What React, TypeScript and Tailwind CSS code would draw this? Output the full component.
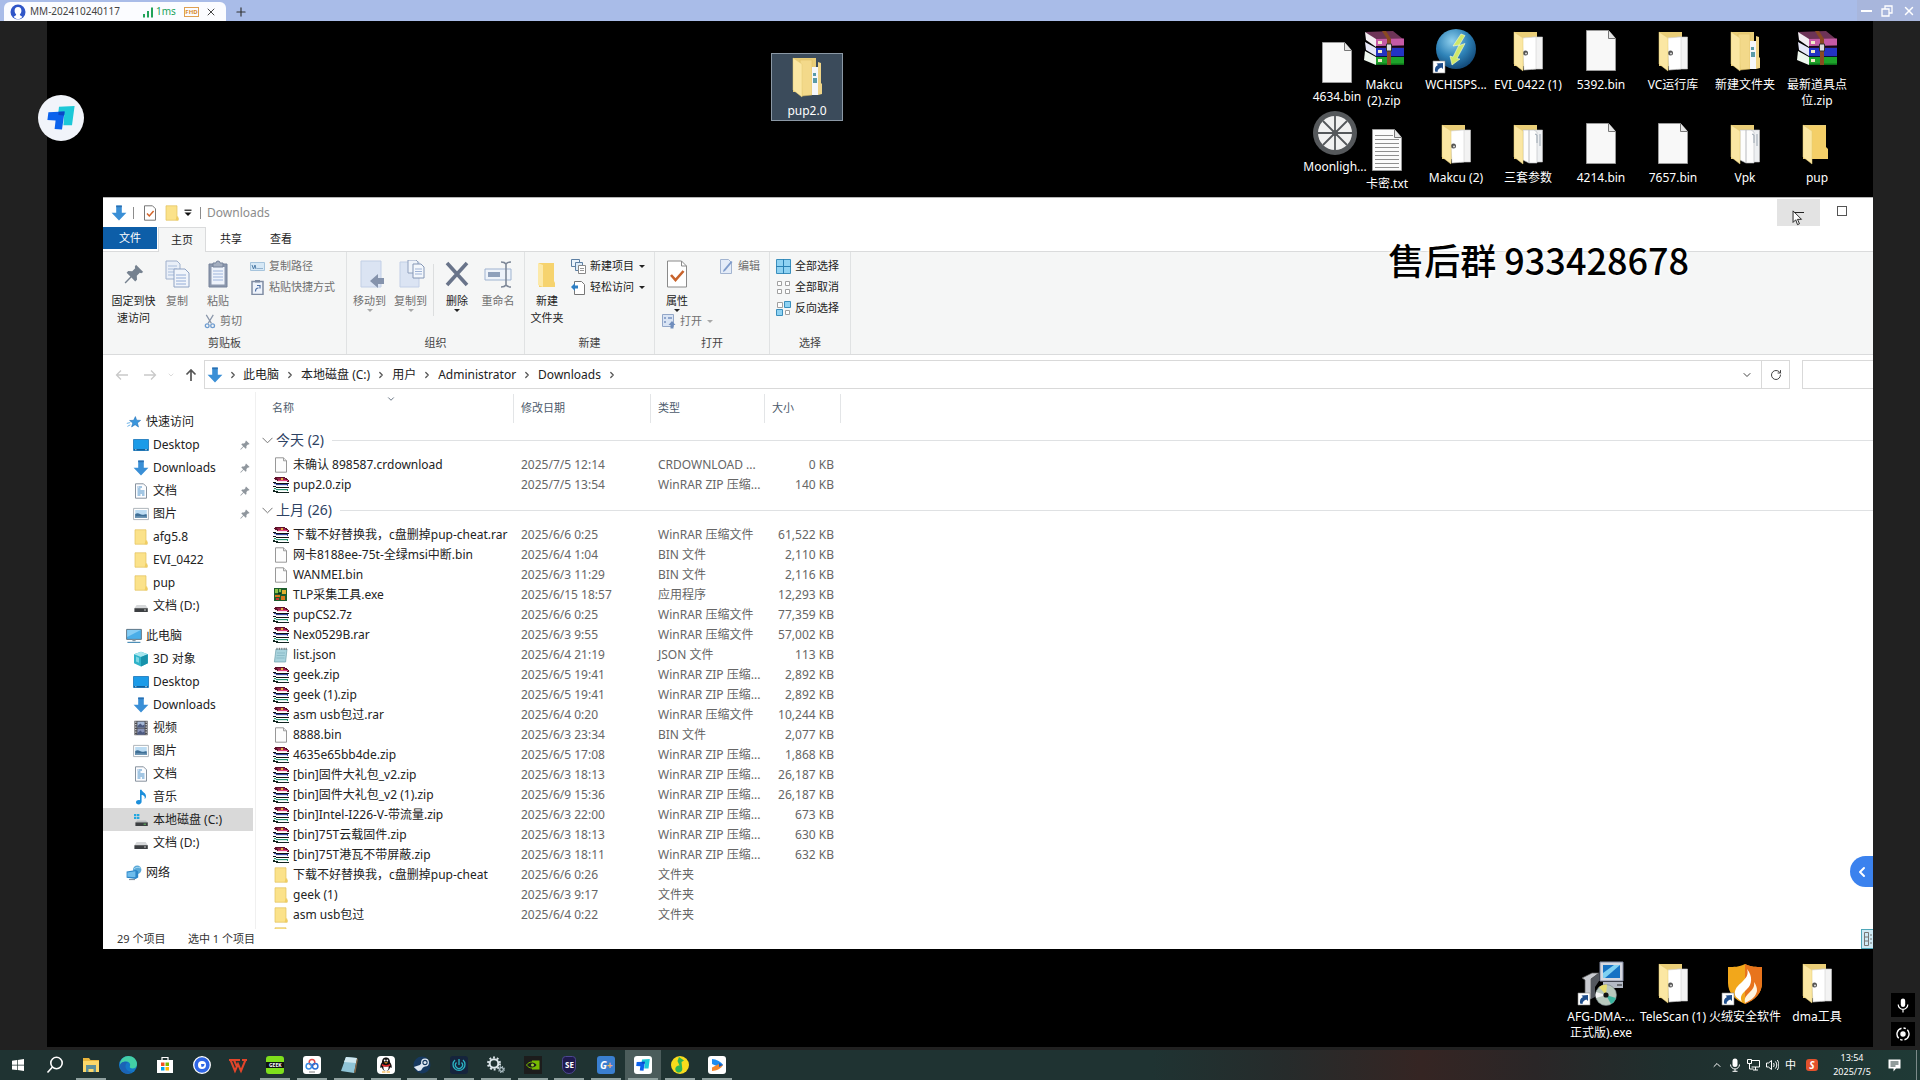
import type { ReactNode } from "react";
import { ChevronDown, ChevronLeft, ChevronRight, ChevronUp, Plus, RotateCw, X } from "lucide-react";

type IconProps = { className?: string };

/* ---------- small icons (16px) ---------- */

function FileIcon({ className = "w-4 h-4" }: IconProps) {
  return (
    <svg viewBox="0 0 16 16" className={className}>
      <path d="M2.5.8h8l3 3v11.4h-11z" fill="#fdfdfd" stroke="#8c8c8c" strokeWidth="0.9" />
      <path d="M10.5.8v3h3" fill="#e8e8e8" stroke="#8c8c8c" strokeWidth="0.8" />
    </svg>
  );
}

function RarIcon({ className = "w-4 h-4" }: IconProps) {
  return (
    <svg viewBox="0 0 16 16" className={className} shapeRendering="crispEdges">
      <path d="M2 0h9l4 2v1h1v2H5L1 3V1z" fill="#5c1027" />
      <path d="M3 1h8l3 2H6z" fill="#96204a" />
      <path d="M5 3h10v1H5z" fill="#e0457f" />
      <path d="M1 2l4 2h9v1H5L1 3z" fill="#f3e6ea" />
      <path d="M0 5l5 1h11v1H5L0 6z" fill="#111" />
      <path d="M1 6l4 1h10v2H5L1 8z" fill="#34499c" />
      <path d="M1 7l4 1h9v1H5L1 8z" fill="#dfe4f3" />
      <path d="M0 9l5 1h11v1H5l-5-1z" fill="#111" />
      <path d="M1 11l4 1h10v2H5l-4-1z" fill="#23936f" />
      <path d="M0 12l5 1h9v1H5l-5-1z" fill="#dcefe8" />
      <path d="M0 13l5 1.500h11V16H5l-5-1z" fill="#10241f" />
      <path d="M8 1h2v2H8z" fill="#e3b23c" />
    </svg>
  );
}

function FolderIcon({ className = "w-4 h-4" }: IconProps) {
  return (
    <svg viewBox="0 0 16 16" className={className}>
      <path d="M2 .8h11v11l1.2 1v2.4H2z" fill="#fbe28a" stroke="#e2c25c" strokeWidth="0.7" />
      <path d="M12.4 11.4h1.8v3.8h-2.6z" fill="#f0cd62" />
    </svg>
  );
}

function ExeIcon({ className = "w-4 h-4" }: IconProps) {
  return (
    <svg viewBox="0 0 16 16" className={className} shapeRendering="crispEdges">
      <path d="M1 1h13v13H1z" fill="#1d5c2c" />
      <path d="M2 2h3v4H2zM6 2h2v3H6z" fill="#8bc34a" />
      <path d="M9 3h4v4H9z" fill="#e0b030" />
      <path d="M2 8h5v2H2zM8 9h4v4H8z" fill="#d67a1d" />
      <path d="M3 11h3v2H3z" fill="#c9302c" />
      <path d="M5 6h3v1H5z" fill="#102e17" />
    </svg>
  );
}

function JsonIcon({ className = "w-4 h-4" }: IconProps) {
  return (
    <svg viewBox="0 0 16 16" className={className}>
      <path d="M3 2h11l-1.4 13H1.4z" fill="#a9d3dd" stroke="#6d9fab" strokeWidth="0.7" />
      <path d="M4 6h8M3.7 8.5h8M3.4 11h8" stroke="#7fb2be" strokeWidth="0.7" />
      <path d="M4 .8v2M6.4.8v2M8.8.8v2M11.2.8v2M13.2.8v2" stroke="#666" strokeWidth="0.9" />
    </svg>
  );
}

function DownArrowIcon({ className = "w-4 h-4" }: IconProps) {
  return (
    <svg viewBox="0 0 16 16" className={className}>
      <path d="M5.2.6h5.6v7.2h4.6L8 15.4.6 7.8h4.6z" fill="#3a8fd6" />
      <path d="M5.2.6h5.6v1.6H5.2z" fill="#2b6fb0" />
    </svg>
  );
}

function StarIcon({ className = "w-4 h-4" }: IconProps) {
  return (
    <svg viewBox="0 0 16 16" className={className}>
      <path
        d="M9.400 2.600l1.200 3.600 4 .2-3.200 2.500 1.100 4.100-3.400-2.300-3.500 2.200 1.200-4L3.600 6.500l4-.2z"
        fill="#3a96dd"
        stroke="#2572b8"
        strokeWidth="0.6"
      />
      <path d="M.8 9.400l3.400-.8M1.400 12.400l3-1.600" stroke="#6db3e8" />
    </svg>
  );
}

function DesktopIcon({ className = "w-4 h-4" }: IconProps) {
  return (
    <svg viewBox="0 0 16 16" className={className}>
      <path d="M.5 2.5h15v11H.5z" fill="#1b9be8" stroke="#1674b8" strokeWidth="0.8" />
      <path d="M1 12h14v1.4H1z" fill="#0e5f9c" />
      <path d="M2 12.7h1.5M12 12.7h2" stroke="#fff" strokeWidth="0.6" />
    </svg>
  );
}

function DocIcon({ className = "w-4 h-4" }: IconProps) {
  return (
    <svg viewBox="0 0 16 16" className={className}>
      <path d="M2.5.8h8l3 3v11.4h-11z" fill="#fcfdff" stroke="#7b8794" strokeWidth="0.9" />
      <path d="M4.5 6h3M4.5 8h7M4.5 10h7M4.5 12h3M9 12h2.5M6 4h3" stroke="#4a90c8" />
      <path d="M4.5 4h1" stroke="#2b6fb0" />
    </svg>
  );
}

function PictureIcon({ className = "w-4 h-4" }: IconProps) {
  return (
    <svg viewBox="0 0 16 16" className={className}>
      <path d="M.6 2.4h14.8v11.2H.6z" fill="#fff" stroke="#9aa3ab" strokeWidth="0.8" />
      <path d="M2.2 4h11.6v8H2.2z" fill="#bcdcf3" />
      <path d="M2.2 8c3-2 5 .6 7 .8 2 .1 3-.6 4.6-.4V12H2.2z" fill="#3f6f96" />
      <path d="M2.2 10.6c4-.8 7 0 11.6-.2V12H2.2z" fill="#6f97b5" />
    </svg>
  );
}

function DriveIcon({ className = "w-4 h-4" }: IconProps) {
  return (
    <svg viewBox="0 0 16 16" className={className}>
      <path d="M3.6 7h9l2.2 3.2H1.4z" fill="#d6d8da" />
      <path d="M1.4 10.2h13.4V14H1.4z" fill="#3c3f42" />
      <path d="M11 12h2" stroke="#e8e8e8" strokeWidth="0.8" />
    </svg>
  );
}

function SystemDriveIcon({ className = "w-4 h-4" }: IconProps) {
  return (
    <svg viewBox="0 0 16 16" className={className}>
      <path d="M1 2h2.4v2.2H1zM4 2h2.4v2.2H4zM1 4.9h2.4V7H1zM4 4.9h2.4V7H4z" fill="#22a7e0" />
      <path d="M4.2 8.6h8.6l2 2H2.4z" fill="#b9bcbe" />
      <path d="M2.4 10.4h12.4V14H2.4z" fill="#3c3f42" />
      <path d="M10.6 12.2h2.4" stroke="#6be06b" strokeWidth="0.8" />
    </svg>
  );
}

function ThisPcIcon({ className = "w-4 h-4" }: IconProps) {
  return (
    <svg viewBox="0 0 16 16" className={className}>
      <path d="M.6 1.4h14.8v10H.6z" fill="#4aaee8" stroke="#5c6f7d" strokeWidth="0.9" />
      <path d="M1.2 2h13.6L1.2 9z" fill="#86cdf4" />
      <path d="M6.4 11.6h3.2v1.6H6.4z" fill="#8a98a3" />
      <path d="M1.4 14.4h13" stroke="#4e8fb8" strokeWidth="1.2" />
    </svg>
  );
}

function CubeIcon({ className = "w-4 h-4" }: IconProps) {
  return (
    <svg viewBox="0 0 16 16" className={className}>
      <path d="M8 .8l6.8 2.4v9L8 15.4 1 12.2v-9z" fill="#2fb3c9" />
      <path d="M8 .8l6.8 2.4L8 6 1 3.2z" fill="#a7e6ee" />
      <path d="M8 6l6.8-2.8v9L8 15.4z" fill="#1792ab" />
      <path d="M3 5.6l3 1.2v5l-3-1.3z" fill="#7cd6e3" />
    </svg>
  );
}

function VideoIcon({ className = "w-4 h-4" }: IconProps) {
  return (
    <svg viewBox="0 0 16 16" className={className}>
      <path d="M1.4.8h13.2v14.4H1.4z" fill="#4b4b50" />
      <path d="M4.4 1.6h7.2v6H4.4z" fill="#a3b7d6" />
      <path d="M4.4 8.6h7.2v6H4.4z" fill="#8793b8" />
      <path d="M4.4 6l3-2.4 2 2 2.2-1v3H4.4zM4.4 13l3-2.4 2 2 2.2-1v3H4.4z" fill="#4d5a80" />
      <path d="M2.8 1.6v13M13.2 1.6v13" stroke="#e6e6e6" strokeDasharray="1.2 1.3" strokeWidth="1.2" />
    </svg>
  );
}

function MusicIcon({ className = "w-4 h-4" }: IconProps) {
  return (
    <svg viewBox="0 0 16 16" className={className}>
      <path d="M7 .8h1.6c.4 2.6 4.6 3 4.4 6.6-.1 1.4-.7 2-1.4 2.6.8-2.6-1-3.8-3-4v6.8c0 1.500-1.400 2.600-3 2.600S3 14.500 3 13.200s1.400-2.200 2.800-2.200c.5 0 .9.1 1.200.2z" fill="#1c8fdb" />
    </svg>
  );
}

function NetworkIcon({ className = "w-4 h-4" }: IconProps) {
  return (
    <svg viewBox="0 0 16 16" className={className}>
      <circle cx="11.200" cy="4.800" r="4.200" fill="#5aa9d8" />
      <path d="M8 4c2-2 4-2 6.600-1" stroke="#a5d8f3" fill="none" />
      <path d="M.6 6.600l9.600-1.600 2 1.600v6L9.600 14 .6 12.800z" fill="#2c86c8" />
      <path d="M1.400 7.400l8-1.200v6l-8-.4z" fill="#6fbdec" />
      <path d="M3 14.600h6" stroke="#7b8894" />
    </svg>
  );
}

function PinIcon({ className = "w-3 h-3" }: IconProps) {
  return (
    <svg viewBox="0 0 20 20" className={className}>
      <path d="M12 .8l7.200 7.200-2 1.200-1.400-.4-3 3 .2 4-1.800 1.600-3.800-3.800L1.600 19.400.6 18.400l5.800-5.800-3.800-3.800 1.600-1.800 4 .2 3-3-.4-1.400z" fill="currentColor" />
    </svg>
  );
}

/* ---------- desktop icons, all on a 44px board ---------- */

function Board({ children }: { children: ReactNode }) {
  return (
    <svg viewBox="0 0 44 44" className="w-11 h-11 overflow-visible">
      {children}
    </svg>
  );
}

const Shortcut = () => (
  <g>
    <path d="M-1 32h12v12H-1z" fill="#fff" stroke="#888" strokeWidth="0.6" />
    <path d="M1 42.500c-.4-3.500.6-5.500 3-6.500L2.500 34.500 9 34v6l-1.700-1.600C5 39.500 3.500 40.500 3.500 43z" fill="#1f4e8c" />
  </g>
);

const BigFile = () => (
  <Board>
    <path d="M7.500 1.500h22l7 8V41.500h-29z" fill="#f8f8f8" stroke="#9a9a9a" />
    <path d="M29.500 1.500v8h7" fill="#e6e6e6" stroke="#777" />
  </Board>
);

const BigText = () => (
  <Board>
    <path d="M7.500 1.500h22l7 8V42.500h-29z" fill="#fbfbfb" stroke="#9a9a9a" />
    <path d="M10 7.500h18M10 11.500h24M10 15.500h24M10 19.500h24M10 23.500h24M10 27.500h24M10 31.500h24M10 35.500h24M10 39.500h24" stroke="#8f8f8f" />
    <path d="M29.500 1.500v8h7" fill="#e6e6e6" stroke="#777" />
  </Board>
);

const BigFolder = ({ kind }: { kind: "gear" | "pages" | "stack" | "empty" }) => (
  <Board>
    <path d="M8 3h23v34H8z" fill="#e9cd77" />
    {kind === "empty" && <path d="M14 4h17v21l2 2v10H16z" fill="#f4cf68" />}
    {kind === "gear" && (
      <g>
        <path d="M26 8h10.500v32H26z" fill="#f3f3f3" stroke="#c8c8c8" strokeWidth="0.6" />
        <path d="M16 9l14-1v32l-12 1z" fill="#fff" stroke="#d0d0d0" strokeWidth="0.6" />
        <circle cx="19.500" cy="24" r="2.500" fill="#555" />
        <circle cx="20" cy="24.500" r="1" fill="#ddd" />
      </g>
    )}
    {kind === "pages" && (
      <g>
        <path d="M27 8h9.500v32H27z" fill="#eef0f2" stroke="#c0c0c0" strokeWidth="0.6" />
        <path d="M17 8l6 0v33l-6-3zM23 8h5l3 2v31h-8z" fill="#fdfdfd" stroke="#b8bcc0" strokeWidth="0.6" />
        <path d="M29 12l2 1v8M34 12v12" fill="none" stroke="#9aa5b0" />
      </g>
    )}
    {kind === "stack" && (
      <g>
        <path d="M15 5h12v35l-10 1z" fill="#f3d98a" stroke="#d9b95d" strokeWidth="0.5" />
        <path d="M27 12h6v28h-6z" fill="#f5f7fa" />
        <path d="M28 18h3v3h-3zM28 23h4v5h-4z" fill="#5a9aa8" />
        <path d="M33 7v33l4-1V29l-1-1V8z" fill="#f0d588" />
      </g>
    )}
    <path d="M8 3l9 6v33L8 35z" fill="#fbe7a3" stroke="#e3c873" strokeWidth="0.5" />
  </Board>
);

const BigRar = () => (
  <Board>
    <path d="M3 3l28-1 10 8-27 1z" fill="#6d3457" />
    <path d="M14 10l28-.5v7L14 17z" fill="#c65aa6" />
    <path d="M3 3l11 7v8L4 11z" fill="#f3eef2" />
    <path d="M14 17.500h28v1.500H14z" fill="#2a0f2a" />
    <path d="M14 19h28v8H14z" fill="#2333c4" />
    <path d="M3 13l11 6v8L4 21z" fill="#e6e8f8" />
    <path d="M14 27h28v1.500H14z" fill="#0a0f3c" />
    <path d="M14 28h28v8H14z" fill="#1da32a" />
    <path d="M3 22l11 6v8L2 31z" fill="#eef7ee" />
    <path d="M14 34.500h28V36H14z" fill="#0c6d18" />
    <path d="M16 12h4v3h-4zM16 21h4v3h-4zM16 30h4v3h-4z" fill="#f2e9c8" />
    <path d="M20 2l5 8v26h4V10l-5-8z" fill="#8a4a22" />
    <path d="M24.500 15h5v7h-5z" fill="#ddd" stroke="#333" />
  </Board>
);

const BigWch = () => (
  <Board>
    <defs>
      <radialGradient id="wch" cx="0.4" cy="0.3" r="0.8">
        <stop offset="0" stopColor="#8fd0ee" />
        <stop offset="0.5" stopColor="#2f83b8" />
        <stop offset="1" stopColor="#0a3a68" />
      </radialGradient>
    </defs>
    <circle cx="22" cy="20" r="20" fill="url(#wch)" />
    <path d="M27 5l-8 12 6-1-6 12-3-1 2 9 8-6-3-.5 8-15-6 2 6-10z" fill="#cfe86a" stroke="#f6fbd6" strokeWidth="0.6" />
    <Shortcut />
  </Board>
);

const BigMoonlight = () => (
  <Board>
    <circle cx="22" cy="22" r="22" fill="#55585b" />
    <circle cx="22" cy="22" r="17" fill="#f1f1f1" />
    <path d="M22 5v34M5 22h34M10 10l24 24M34 10L10 34" stroke="#55585b" strokeWidth="1.800" />
    <circle cx="22" cy="22" r="3" fill="#55585b" />
  </Board>
);

const BigInstaller = () => (
  <Board>
    <path d="M21 1h23v19H21z" fill="#d5d8e0" stroke="#8088a0" />
    <path d="M24 4h17v13H24z" fill="#1572c4" />
    <path d="M24 12l11-8h6l-15 13h-2z" fill="#7fd0f2" />
    <path d="M24 21h20v6H24z" fill="#b4bac6" />
    <path d="M38 24h5" stroke="#222" />
    <path d="M3 17l10-5h7l-8 6v20H6V19z" fill="#c9cbd0" stroke="#555" strokeWidth="0.7" />
    <path d="M12 18l8-6v8l-4 6v10l-4 2z" fill="#54585f" />
    <circle cx="27" cy="34" r="10.500" fill="#b9c8bd" stroke="#6e7a80" strokeWidth="0.6" />
    <path d="M27 34L20 26a10.500 10.500 0 0 1 8-2.500z" fill="#e6dd6f" />
    <path d="M27 34l10 3a10.500 10.500 0 0 1-5 6z" fill="#3cb5a0" />
    <path d="M27 34l-10 3a10 10 0 0 1 0-6z" fill="#f4f4f4" />
    <circle cx="27" cy="34" r="2.600" fill="#111" />
    <Shortcut />
  </Board>
);

const BigHuorong = () => (
  <Board>
    <path d="M22 3c6 3 11 3 17 3v16c0 10-7 17-17 21C12 39 5 32 5 22V6c6 0 11 0 17-3z" fill="#f2a71b" />
    <path d="M22 3c6 3 11 3 17 3v16c0 10-7 17-17 21z" fill="#e8741c" />
    <path d="M24 8c2 6-1 9-6 14-5 4-8 9-5 14l6 5c-3-6 1-9 5-13 5-4 6-13 0-20z" fill="#fff" />
    <path d="M31 21c1 5-2 8-5 11-3 3-5 5-4 10 7-3 11-7 12-12 0-4-1-6-3-9z" fill="#fff4df" />
    <Shortcut />
  </Board>
);

const desktopIcons: { label: string; icon: ReactNode; pos: string; selected?: boolean }[] = [
  { label: "pup2.0", icon: <BigFolder kind="stack" />, pos: "left-[724px] top-[32px]", selected: true },
  { label: "4634.bin", icon: <BigFile />, pos: "right-[500px] top-[18px]" },
  { label: "Makcu\n(2).zip", icon: <BigRar />, pos: "right-[453px] top-[6px]" },
  { label: "WCHISPS...", icon: <BigWch />, pos: "right-[381px] top-[6px]" },
  { label: "EVI_0422 (1)", icon: <BigFolder kind="gear" />, pos: "right-[309px] top-[6px]" },
  { label: "5392.bin", icon: <BigFile />, pos: "right-[236px] top-[6px]" },
  { label: "VC运行库", icon: <BigFolder kind="gear" />, pos: "right-[164px] top-[6px]" },
  { label: "新建文件夹", icon: <BigFolder kind="stack" />, pos: "right-[92px] top-[6px]" },
  { label: "最新道具点\n位.zip", icon: <BigRar />, pos: "right-[20px] top-[6px]" },
  { label: "Moonligh...", icon: <BigMoonlight />, pos: "right-[502px] top-[88px]" },
  { label: "卡密.txt", icon: <BigText />, pos: "right-[450px] top-[105px]" },
  { label: "Makcu (2)", icon: <BigFolder kind="gear" />, pos: "right-[381px] top-[99px]" },
  { label: "三套参数", icon: <BigFolder kind="pages" />, pos: "right-[309px] top-[99px]" },
  { label: "4214.bin", icon: <BigFile />, pos: "right-[236px] top-[99px]" },
  { label: "7657.bin", icon: <BigFile />, pos: "right-[164px] top-[99px]" },
  { label: "Vpk", icon: <BigFolder kind="pages" />, pos: "right-[92px] top-[99px]" },
  { label: "pup", icon: <BigFolder kind="empty" />, pos: "right-[20px] top-[99px]" },
  { label: "AFG-DMA-...\n正式版).exe", icon: <BigInstaller />, pos: "right-[236px] top-[938px]" },
  { label: "TeleScan (1)", icon: <BigFolder kind="gear" />, pos: "right-[164px] top-[938px]" },
  { label: "火绒安全软件", icon: <BigHuorong />, pos: "right-[92px] top-[938px]" },
  { label: "dma工具", icon: <BigFolder kind="gear" />, pos: "right-[20px] top-[938px]" },
];

function DesktopTile({ label, icon, pos, selected }: (typeof desktopIcons)[number]) {
  return (
    <div
      className={`absolute ${pos} w-[72px] border p-px flex flex-col items-center gap-1 ${
        selected ? "border-[#8b98a5] bg-[#3b4b5b]" : "border-transparent"
      }`}
    >
      {icon}
      <span className="text-xs leading-4 text-white text-center whitespace-pre">{label}</span>
    </div>
  );
}

/* ---------- remote session bar ---------- */

function ToDeskLogo({ className }: IconProps) {
  return (
    <svg viewBox="0 0 28 24" className={className}>
      <path d="M12 .8L27.600 0 25 19.200h-8.600L17.200 9H11z" fill="#1cc8d8" />
      <path d="M1.400 6.200L17.600 5.400 15 23.600l-7.400-.6 1-8.600L.4 14z" fill="#0b62ec" />
      <path d="M11.600 5.700l6-.3-.5 4.200-5.700-.5z" fill="#0a47c4" />
    </svg>
  );
}

function SessionBar() {
  return (
    <header className="h-[21px] shrink-0 bg-[#a9bce8] flex items-end pl-1">
      <div className="h-[19px] w-[222px] bg-[#fbfcff] rounded-t-md flex items-center pl-1.5 text-[10px] text-[#444]">
        <svg viewBox="0 0 16 16" className="w-4 h-4 mr-1">
          <circle cx="8" cy="8" r="7.500" fill="#2f55c8" />
          <path d="M8 3c2.300 0 3.400 1.700 3.400 3.800 0 1.700-.8 2.900-1.600 3.600.1 1.400 1.700 1.300 2.600 2.600A7 7 0 0 1 8 15.400 7 7 0 0 1 3.600 13c.9-1.300 2.500-1.200 2.600-2.600C5.400 9.700 4.600 8.500 4.600 6.800 4.600 4.700 5.700 3 8 3z" fill="#fff" />
        </svg>
        <span className="w-[112px]">MM-202410240117</span>
        <svg viewBox="0 0 12 12" className="w-3 h-3 mr-0.5">
          <path d="M1 8h2v3.500H1zM5 5h2v6.500H5zM9 1.500h2v10H9z" fill="#22a35a" />
        </svg>
        <span className="w-7 text-[#22a35a]">1ms</span>
        <span className="w-[15px] h-[10px] border border-[#e0a050] text-[#d98a2c] text-[6px] leading-[8px] font-bold text-center">FHD</span>
        <button aria-label="关闭标签" className="ml-1.5">
          <X className="w-3 h-3" strokeWidth={2} />
        </button>
      </div>
      <button aria-label="新建标签" className="ml-2 mb-0.5 text-[#333]">
        <Plus className="w-3.5 h-3.5" strokeWidth={2} />
      </button>
      <div className="ml-auto self-stretch w-[63px] bg-[#a8b6dc] flex items-center justify-around text-white">
        <button aria-label="最小化" className="w-[11px] h-0.5 bg-white" />
        <button aria-label="还原">
          <svg viewBox="0 0 12 12" className="w-3 h-3" fill="none" stroke="currentColor" strokeWidth="1.300">
            <path d="M1 4h7v7H1zM4 4V1h7v7H8" />
          </svg>
        </button>
        <button aria-label="关闭">
          <X className="w-3.5 h-3.5" strokeWidth={2.5} />
        </button>
      </div>
    </header>
  );
}

/* ---------- explorer window ---------- */

function TitleBar() {
  return (
    <div className="h-[29px] shrink-0 flex items-center pl-2">
      <DownArrowIcon className="w-4 h-4" />
      <i className="w-px h-3 bg-[#8c8c8c] ml-1.5 mr-2" />
      <svg viewBox="0 0 16 16" className="w-4 h-4">
        <path d="M2.500.8h8l3 3v11.400h-11z" fill="#fff" stroke="#777" />
        <path d="M5 8.600l2.300 2.400L11.600 6" fill="none" stroke="#d2642a" strokeWidth="1.500" />
      </svg>
      <FolderIcon className="w-4 h-4 ml-1.5" />
      <svg viewBox="0 0 8 8" className="w-2 h-2 ml-1">
        <path d="M.5 1.200h7" stroke="#111" strokeWidth="1.200" />
        <path d="M.5 3.500h7L4 7z" fill="#111" />
      </svg>
      <i className="w-px h-3 bg-[#8c8c8c] ml-2 mr-1.5" />
      <h1 className="text-xs text-[#8c8c8c]">Downloads</h1>
      <div className="ml-auto flex h-full items-start pt-px pr-[10px]">
        <div className="relative">
          <button aria-label="最小化" className="w-[43px] h-[27px] bg-[#e3e3e3] flex items-center justify-center">
            <i className="w-2.5 h-px bg-[#222]" />
          </button>
          {/* mouse pointer */}
          <svg viewBox="0 0 12 18" className="absolute left-[15px] top-[11px] w-[11px] h-4">
            <path d="M1 1v13l3-3 2 5.500 2.200-1L6 10.500h4.500z" fill="#fff" stroke="#111" />
          </svg>
        </div>
        <button aria-label="最大化" className="w-[43px] h-6 flex items-center justify-center">
          <i className="w-2.5 h-2.5 border border-[#555]" />
        </button>
      </div>
    </div>
  );
}

function Tabs() {
  return (
    <div className="h-[25px] shrink-0 flex text-[11px] text-[#222] border-b border-[#dadbdc]">
      <button className="w-[54px] h-[22px] bg-[#0d5ea8] text-white">文件</button>
      <button className="w-[48px] h-[25px] ml-px bg-[#f5f6f6] border border-b-0 border-[#dadbdc]">主页</button>
      <button className="w-[50px] h-6">共享</button>
      <button className="w-[50px] h-6">查看</button>
    </div>
  );
}

function Caret({ light }: { light?: boolean }) {
  return <i className={`border-x-[3px] border-x-transparent border-t-[3px] ${light ? "border-t-[#a8a8a8]" : "border-t-[#222]"}`} />;
}

function BigButton({ icon, label, off, caret, className = "w-10" }: { icon: ReactNode; label: string; off?: boolean; caret?: boolean; className?: string }) {
  return (
    <button className={`${className} pt-2 flex flex-col items-center text-[11px] leading-[17px] ${off ? "text-[#707070]" : "text-[#222]"}`}>
      <span className="h-8 flex items-start">{icon}</span>
      <span className="whitespace-pre text-center">{label}</span>
      {caret && (
        <span className="h-0">
          <span className="flex">
            <Caret light={off} />
          </span>
        </span>
      )}
    </button>
  );
}

function SmallButton({ icon, label, off, caret }: { icon: ReactNode; label: string; off?: boolean; caret?: boolean }) {
  return (
    <button className={`h-[21px] flex items-center gap-1 text-[11px] whitespace-nowrap ${off ? "text-[#707070]" : "text-[#222]"}`}>
      {icon}
      <span>{label}</span>
      {caret && (
        <span className="ml-px flex">
          <Caret light={off} />
        </span>
      )}
    </button>
  );
}

function Group({ label, className, children }: { label: string; className: string; children: ReactNode }) {
  return (
    <section className={`${className} shrink-0 border-r border-[#e0e2e3] flex flex-col`}>
      <div className="h-[82px] flex">{children}</div>
      <h2 className="text-[11px] leading-[18px] text-center text-[#444]">{label}</h2>
    </section>
  );
}

const svg28 = "w-7 h-7";
const svg15 = "w-[15px] h-[15px]";

const CopyBig = () => (
  <svg viewBox="0 0 28 28" className={svg28}>
    <path d="M3 1h11l3 3v15H3z" fill="#e9eff8" stroke="#9fb0cc" />
    <path d="M5 6h9M5 9h9M5 12h9M5 15h9" stroke="#a9bddb" />
    <path d="M11 9h11l4 4v14H11z" fill="#f1f5fb" stroke="#8fa3c4" />
    <path d="M13 15h10M13 18h10M13 21h10M13 24h10" stroke="#93acd6" />
  </svg>
);

const PasteBig = () => (
  <svg viewBox="0 0 28 28" className={svg28}>
    <path d="M5 4h18v23H5z" fill="#8c98ad" stroke="#76839b" />
    <path d="M7.500 7h13v17.500h-13z" fill="#eef3fb" />
    <path d="M9 11h10M9 14h10M9 17h10M9 20h10" stroke="#9db4dc" />
    <path d="M9 3h3a2 2 0 0 1 4 0h3v4H9z" fill="#a4aebf" stroke="#76839b" />
  </svg>
);

const MoveTo = () => (
  <svg viewBox="0 0 28 28" className={svg28}>
    <path d="M5 1h20v26H5z" fill="#dbe4f3" stroke="#c2cfe6" />
    <path d="M14 21l8-7v4h8v6h-8v4z" fill="#8593ac" />
  </svg>
);

const CopyTo = () => (
  <svg viewBox="0 0 28 28" className={svg28}>
    <path d="M3 2h19v25H3z" fill="#dbe4f3" stroke="#c2cfe6" />
    <path d="M11 0h8l2 2v11H11z" fill="#eef3fa" stroke="#8fa0bd" />
    <path d="M16 4h8l3 3v11H16z" fill="#f3f7fc" stroke="#8496b5" />
    <path d="M18 9h7M18 11.500h7M18 14h7" stroke="#9fb3d6" />
  </svg>
);

const RenameBig = () => (
  <svg viewBox="0 0 28 28" className={svg28}>
    <path d="M1 9h26v11H1z" fill="#eef3fa" stroke="#9fb3d0" />
    <path d="M4 12h12v5H4z" fill="#8ea0bb" />
    <path d="M17 2c2 0 4 .5 5 2 1-1.500 3-2 5-2M22 4v21M17 27c2 0 4-.5 5-2 1 1.500 3 2 5 2" fill="none" stroke="#7d8797" strokeWidth="1.600" />
  </svg>
);

function Ribbon() {
  return (
    <div className="h-[103px] shrink-0 bg-[#f5f6f6] border-b border-[#dadbdc] flex">
      <Group label="剪贴板" className="w-[244px]">
        <BigButton className="ml-[7px] w-[47px]" label={"固定到快\n速访问"} icon={<PinIcon className="w-5 h-5 mt-1 text-[#75818f]" />} />
        <BigButton label="复制" off icon={<CopyBig />} />
        <div className="w-[48px] ml-px">
          <BigButton label="粘贴" off icon={<PasteBig />} />
          <div className="pl-1.5 pt-0.5">
            <SmallButton
              off
              label="剪切"
              icon={
                <svg viewBox="0 0 12 16" className="w-3 h-[15px]" fill="none">
                  <path d="M2 1l5.500 9M9.500 1L4 10" stroke="#8996aa" strokeWidth="1.300" />
                  <circle cx="3" cy="12.500" r="2" stroke="#6f9dd0" strokeWidth="1.400" />
                  <circle cx="8.800" cy="12.500" r="2" stroke="#6f9dd0" strokeWidth="1.400" />
                </svg>
              }
            />
          </div>
        </div>
        <div className="pt-1 pl-1">
          <SmallButton
            off
            label="复制路径"
            icon={
              <svg viewBox="0 0 15 15" className={svg15}>
                <path d="M.5 3.500h14v8H.5z" fill="#d6e8f6" stroke="#a6c4dc" />
                <path d="M2 6l1.500 4L5 6l1 4M7.500 9.500h1M9.500 9.500h1M11.500 9.500h1" fill="none" stroke="#4f7da8" />
              </svg>
            }
          />
          <SmallButton
            off
            label="粘贴快捷方式"
            icon={
              <svg viewBox="0 0 15 15" className={svg15}>
                <path d="M2 1.500h11v13H2z" fill="#eef3fb" stroke="#7f8ca3" strokeWidth="1.500" />
                <path d="M5 0h5v2.500H5z" fill="#7f8ca3" />
                <path d="M5.500 11.500c0-2.500 1-3.500 3-3.500M7 5.500h3v3" fill="none" stroke="#4d6fa5" strokeWidth="1.200" />
              </svg>
            }
          />
        </div>
      </Group>

      <Group label="组织" className="w-[178px]">
        <BigButton className="ml-0.5 w-[41px]" label="移动到" off caret icon={<MoveTo />} />
        <BigButton className="w-[41px]" label="复制到" off caret icon={<CopyTo />} />
        <i className="w-px h-[52px] mt-3 mx-0.5 bg-[#dcdedf]" />
        <BigButton
          className="w-[42px]"
          label="删除"
          caret
          icon={
            <svg viewBox="0 0 28 28" className={svg28}>
              <path d="M4 3l20 22M24 3L4 25" stroke="#69748a" strokeWidth="3.600" />
            </svg>
          }
        />
        <BigButton label="重命名" off icon={<RenameBig />} />
      </Group>

      <Group label="新建" className="w-[130px]">
        <BigButton
          className="ml-0.5 w-10"
          label={"新建\n文件夹"}
          icon={
            <svg viewBox="0 0 28 28" className={svg28}>
              <path d="M6 3h15v18l1 2v4H6z" fill="#f6d36e" />
              <path d="M5 3l5 2v22l-5-2z" fill="#fce9a9" />
            </svg>
          }
        />
        <div className="pt-1 pl-1">
          <SmallButton
            caret
            label="新建项目"
            icon={
              <svg viewBox="0 0 15 15" className={svg15}>
                <path d="M.5.5h8v7h-8z" fill="#eaf3fb" stroke="#5d7fa3" />
                <path d="M4.500 3.500h7v8h-7z" fill="#dcebf8" stroke="#5d7fa3" />
                <path d="M7.500 6.500h7v8h-7z" fill="#fff" stroke="#888" />
                <path d="M9 9.500h4M9 11.500h4" stroke="#999" />
              </svg>
            }
          />
          <SmallButton
            caret
            label="轻松访问"
            icon={
              <svg viewBox="0 0 15 15" className={svg15}>
                <path d="M3.500 1.500h7l3 3v10h-10z" fill="#fff" stroke="#777" />
                <path d="M0 7l4-4v2.500h3v3H4V11z" fill="#2e7fc4" />
              </svg>
            }
          />
        </div>
      </Group>

      <Group label="打开" className="w-[115px]">
        <div className="w-[62px]">
          <BigButton
            className="ml-0.5 w-10"
            label="属性"
            caret
            icon={
              <svg viewBox="0 0 28 28" className={svg28}>
                <path d="M4.500 1h14l5 5v21h-19z" fill="#fff" stroke="#8a8a8a" />
                <path d="M18.500 1v5h5" fill="none" stroke="#8a8a8a" />
                <path d="M8 15l4.500 5 8-9" fill="none" stroke="#c8632b" strokeWidth="2.600" />
              </svg>
            }
          />
          <div className="pl-1.5 pt-0.5">
            <SmallButton
              off
              caret
              label="打开"
              icon={
                <svg viewBox="0 0 15 15" className={svg15}>
                  <path d="M1.500.5h11v12h-11z" fill="#d9e4f4" stroke="#93a7c8" />
                  <path d="M3 3h2v2H3zM7 3h4v2H7zM3 7h2v2H3z" fill="#8fa6cd" />
                  <path d="M11 7l3.500 4h-2v3.500h-3V11h-2z" fill="#6f8dbd" />
                </svg>
              }
            />
          </div>
        </div>
        <div className="pt-1 pl-0.5">
          <SmallButton
            off
            label="编辑"
            icon={
              <svg viewBox="0 0 15 15" className={svg15}>
                <path d="M1.500.5h8l3 3v11h-11z" fill="#e4ecf8" stroke="#a3b4d0" />
                <path d="M13.500 3L6 12l-2 1 .6-2.300L12 2z" fill="#7f9ccb" />
              </svg>
            }
          />
        </div>
      </Group>

      <Group label="选择" className="w-[81px]">
        <div className="pt-1 pl-1.5">
          <SmallButton
            label="全部选择"
            icon={
              <svg viewBox="0 0 15 15" className={svg15}>
                <path d="M.5.5h14v14H.5z" fill="#8fd2f2" stroke="#3a8fbd" />
                <path d="M7.500 0v15M0 7.500h15" stroke="#2a81b4" />
              </svg>
            }
          />
          <SmallButton
            label="全部取消"
            icon={
              <svg viewBox="0 0 15 15" className={svg15} fill="#fff" stroke="#a0a0a0">
                <path d="M1.500 1.500h4v4h-4zM9.500 1.500h4v4h-4zM1.500 9.500h4v4h-4zM9.500 9.500h4v4h-4z" />
              </svg>
            }
          />
          <SmallButton
            label="反向选择"
            icon={
              <svg viewBox="0 0 15 15" className={svg15}>
                <path d="M1.500 1.500h5v5h-5zM9.500 9.500h4v4h-4z" fill="#fff" stroke="#a0a0a0" />
                <path d="M8.500.5h6v6h-6zM.5 8.500h6v6h-6z" fill="#8fd2f2" stroke="#3a8fbd" />
              </svg>
            }
          />
        </div>
      </Group>
    </div>
  );
}

function AddressBar() {
  const crumbs = ["此电脑", "本地磁盘 (C:)", "用户", "Administrator", "Downloads"];
  return (
    <div className="h-[37px] shrink-0 pt-[5px] flex items-start text-xs text-[#222]">
      <div className="w-[101px] h-[29px] flex items-center text-[#c9c9c9]">
        <svg viewBox="0 0 14 12" className="w-3.5 h-3 ml-3" fill="none" stroke="currentColor" strokeWidth="1.300">
          <path d="M6 1.500L1.500 6 6 10.500M1.500 6H13" />
        </svg>
        <svg viewBox="0 0 14 12" className="w-3.5 h-3 ml-3.5" fill="none" stroke="currentColor" strokeWidth="1.300">
          <path d="M8 1.500L12.500 6 8 10.500M12.500 6H1" />
        </svg>
        <ChevronDown className="w-2 h-2 ml-2.5" />
        <svg viewBox="0 0 12 12" className="w-3 h-3 ml-2.5 text-[#555]" fill="none" stroke="currentColor" strokeWidth="1.700">
          <path d="M1.500 5.500L6 1l4.500 4.500M6 1v11" />
        </svg>
      </div>
      <nav className="h-[29px] flex-1 border border-[#d9d9d9] flex items-center pl-0.5" aria-label="地址">
        <DownArrowIcon className="w-4 h-4" />
        <span className="w-5 flex justify-center">
          <ChevronRight className="w-2.5 h-2.5 text-[#555]" strokeWidth={3} />
        </span>
        {crumbs.map((c) => (
          <span key={c} className="flex items-center">
            <a href="#path">{c}</a>
            <span className="w-[22px] flex justify-center">
              <ChevronRight className="w-2.5 h-2.5 text-[#555]" strokeWidth={3} />
            </span>
          </span>
        ))}
        <ChevronDown className="w-3 h-3 ml-auto mr-2 text-[#444]" />
        <button aria-label="刷新" className="w-[28px] h-full border-l border-[#d9d9d9] flex items-center justify-center">
          <RotateCw className="w-3 h-3 text-[#444]" />
        </button>
      </nav>
      <input aria-label="搜索" className="w-[71px] h-[29px] ml-3 border border-r-0 border-[#d9d9d9] outline-none" />
    </div>
  );
}

type NavItem = { label: string; icon: ReactNode; root?: boolean; pin?: boolean; active?: boolean };

const navGroups: NavItem[][] = [
  [
    { label: "快速访问", icon: <StarIcon />, root: true },
    { label: "Desktop", icon: <DesktopIcon />, pin: true },
    { label: "Downloads", icon: <DownArrowIcon />, pin: true },
    { label: "文档", icon: <DocIcon />, pin: true },
    { label: "图片", icon: <PictureIcon />, pin: true },
    { label: "afg5.8", icon: <FolderIcon /> },
    { label: "EVI_0422", icon: <FolderIcon /> },
    { label: "pup", icon: <FolderIcon /> },
    { label: "文档 (D:)", icon: <DriveIcon /> },
  ],
  [
    { label: "此电脑", icon: <ThisPcIcon />, root: true },
    { label: "3D 对象", icon: <CubeIcon /> },
    { label: "Desktop", icon: <DesktopIcon /> },
    { label: "Downloads", icon: <DownArrowIcon /> },
    { label: "视频", icon: <VideoIcon /> },
    { label: "图片", icon: <PictureIcon /> },
    { label: "文档", icon: <DocIcon /> },
    { label: "音乐", icon: <MusicIcon /> },
    { label: "本地磁盘 (C:)", icon: <SystemDriveIcon />, active: true },
    { label: "文档 (D:)", icon: <DriveIcon /> },
  ],
  [{ label: "网络", icon: <NetworkIcon />, root: true }],
];

function NavPane() {
  return (
    <nav className="w-[153px] shrink-0 border-r border-[#f0f0f0] pt-[18px] pr-0.5 flex flex-col gap-[7px] text-xs text-[#222]">
      {navGroups.map((items, g) => (
        <ul key={g}>
          {items.map((n) => (
            <li key={n.label}>
              <a
                href="#folder"
                className={`h-[23px] flex items-center gap-1 ${n.root ? "pl-[23px]" : "pl-[30px]"} ${n.active ? "bg-[#d9d9d9]" : ""}`}
              >
                {n.icon}
                <span>{n.label}</span>
                {n.pin && <PinIcon className="w-2.5 h-2.5 ml-auto mr-[3px] text-[#8f969d]" />}
              </a>
            </li>
          ))}
        </ul>
      ))}
    </nav>
  );
}

const rar = <RarIcon />;
const file = <FileIcon />;
const folder = <FolderIcon />;

type Row = [icon: ReactNode, name: string, date: string, type: string, size: string];

const fileGroups: { title: string; rows: Row[] }[] = [
  {
    title: "今天 (2)",
    rows: [
      [file, "未确认 898587.crdownload", "2025/7/5 12:14", "CRDOWNLOAD ...", "0 KB"],
      [rar, "pup2.0.zip", "2025/7/5 13:54", "WinRAR ZIP 压缩...", "140 KB"],
    ],
  },
  {
    title: "上月 (26)",
    rows: [
      [rar, "下载不好替换我，c盘删掉pup-cheat.rar", "2025/6/6 0:25", "WinRAR 压缩文件", "61,522 KB"],
      [file, "网卡8188ee-75t-全绿msi中断.bin", "2025/6/4 1:04", "BIN 文件", "2,110 KB"],
      [file, "WANMEI.bin", "2025/6/3 11:29", "BIN 文件", "2,116 KB"],
      [<ExeIcon />, "TLP采集工具.exe", "2025/6/15 18:57", "应用程序", "12,293 KB"],
      [rar, "pupCS2.7z", "2025/6/6 0:25", "WinRAR 压缩文件", "77,359 KB"],
      [rar, "Nex0529B.rar", "2025/6/3 9:55", "WinRAR 压缩文件", "57,002 KB"],
      [<JsonIcon />, "list.json", "2025/6/4 21:19", "JSON 文件", "113 KB"],
      [rar, "geek.zip", "2025/6/5 19:41", "WinRAR ZIP 压缩...", "2,892 KB"],
      [rar, "geek (1).zip", "2025/6/5 19:41", "WinRAR ZIP 压缩...", "2,892 KB"],
      [rar, "asm usb包过.rar", "2025/6/4 0:20", "WinRAR 压缩文件", "10,244 KB"],
      [file, "8888.bin", "2025/6/3 23:34", "BIN 文件", "2,077 KB"],
      [rar, "4635e65bb4de.zip", "2025/6/5 17:08", "WinRAR ZIP 压缩...", "1,868 KB"],
      [rar, "[bin]固件大礼包_v2.zip", "2025/6/3 18:13", "WinRAR ZIP 压缩...", "26,187 KB"],
      [rar, "[bin]固件大礼包_v2 (1).zip", "2025/6/9 15:36", "WinRAR ZIP 压缩...", "26,187 KB"],
      [rar, "[bin]Intel-I226-V-带流量.zip", "2025/6/3 22:00", "WinRAR ZIP 压缩...", "673 KB"],
      [rar, "[bin]75T云载固件.zip", "2025/6/3 18:13", "WinRAR ZIP 压缩...", "630 KB"],
      [rar, "[bin]75T港瓦不带屏蔽.zip", "2025/6/3 18:11", "WinRAR ZIP 压缩...", "632 KB"],
      [folder, "下载不好替换我，c盘删掉pup-cheat", "2025/6/6 0:26", "文件夹", ""],
      [folder, "geek (1)", "2025/6/3 9:17", "文件夹", ""],
      [folder, "asm usb包过", "2025/6/4 0:22", "文件夹", ""],
      [folder, "", "", "", ""],
    ],
  },
];

function FileTable() {
  const head = "h-[29px] border-r border-[#e3e5e7] flex items-center font-normal";
  return (
    <div className="flex-1 min-w-0 overflow-hidden">
      <table className="w-full table-fixed text-xs text-[#666] whitespace-nowrap">
        <colgroup>
          <col className="w-[258px]" />
          <col className="w-[137px]" />
          <col className="w-[114px]" />
          <col className="w-[76px]" />
          <col />
        </colgroup>
        <thead className="text-[11px] text-[#4c5a6b]">
          <tr className="h-[33px]">
            <th className="p-0">
              <div className={`${head} relative pl-4`}>
                名称
                <ChevronDown className="absolute left-[130px] top-0 w-2.5 h-2.5" />
              </div>
            </th>
            <th className="p-0"><div className={`${head} pl-[7px]`}>修改日期</div></th>
            <th className="p-0"><div className={`${head} pl-[7px]`}>类型</div></th>
            <th className="p-0"><div className={`${head} pl-[7px]`}>大小</div></th>
            <td />
          </tr>
        </thead>
        {fileGroups.map((g) => (
          <tbody key={g.title}>
            <tr className="h-[30px]">
              <th colSpan={5} className="p-0 font-normal">
                <div className="flex items-center pl-1.5 text-sm leading-5 text-[#2d4263]">
                  <svg viewBox="0 0 11 7" className="w-[11px] h-[7px] mr-[3px]" fill="none" stroke="#777">
                    <path d="M.5.800l5 5 5-5" />
                  </svg>
                  {g.title}
                  <i className="flex-1 h-px bg-[#dfe1e3] ml-2" />
                </div>
              </th>
            </tr>
            {g.rows.map(([icon, name, date, type, size]) => (
              <tr key={name} className="h-5">
                <td className="p-0">
                  <div className="h-5 flex items-center gap-1 pl-[17px] text-[#222]">
                    {icon}
                    <span>{name}</span>
                  </div>
                </td>
                <td className="p-0 pl-[7px]">{date}</td>
                <td className="p-0 pl-[7px]">{type}</td>
                <td className="p-0 pr-[7px] text-right">{size}</td>
                <td />
              </tr>
            ))}
          </tbody>
        ))}
      </table>
    </div>
  );
}

function ExplorerWindow() {
  return (
    <main className="absolute left-14 top-[176px] right-0 bottom-[98px] bg-white border-t border-[#b5b5b5] flex flex-col overflow-hidden">
      <TitleBar />
      <Tabs />
      <Ribbon />
      <AddressBar />
      <div className="flex-1 min-h-0 flex">
        <NavPane />
        <FileTable />
      </div>
      <footer className="h-5 shrink-0 flex items-center pl-3.5 text-[11px] text-[#333]">
        <span className="w-[71px]">29 个项目</span>
        <span>选中 1 个项目</span>
        <button aria-label="详细信息" className="ml-auto w-3 h-5 border border-r-0 border-[#4fa6b8] bg-[#cfeaf5] pl-0.5">
          <svg viewBox="0 0 8 14" className="w-2 h-3.5" fill="none" stroke="#777">
            <path d="M.5.5h4v13h-4zM.5 5h4M.5 9h4M6 3h2M6 7h2M6 11h2" />
          </svg>
        </button>
      </footer>
    </main>
  );
}

/* ---------- taskbar ---------- */

const t18 = "w-[18px] h-[18px]";

const taskIcons: { name: string; icon: ReactNode; open?: boolean; active?: boolean }[] = [
  {
    name: "文件资源管理器",
    open: true,
    icon: (
      <svg viewBox="0 0 18 18" className={t18}>
        <path d="M1 2h6l1.500 2H17v12H1z" fill="#e9b53c" />
        <path d="M1 5h16v11H1z" fill="#fbd76a" />
        <path d="M4 9h10v7h-2.500v-3h-5v3H4z" fill="#5d8f9a" />
      </svg>
    ),
  },
  {
    name: "Edge",
    icon: (
      <svg viewBox="0 0 18 18" className={t18}>
        <circle cx="9" cy="9" r="9" fill="#1478c8" />
        <path d="M1 7c1-4 4-7 8.500-7C14 0 18 3.500 18 8c0 3-2 4.500-4.500 4.500-2 0-3.500-1-2.500-2.500C12 7 9 5 6 5.500 3.500 6 1.500 7 1 9z" fill="#43cfa6" />
        <path d="M6.500 9.500C6 13 9 16 13.500 15.500 11 18 6 18.500 3 15.500 1 13 .5 10 1.500 8 3 5.500 7 5 9 6.800 7.500 7 6.700 8 6.500 9.500z" fill="#1b63b5" />
      </svg>
    ),
  },
  {
    name: "Microsoft Store",
    icon: (
      <svg viewBox="0 0 18 18" className={t18}>
        <path d="M6 4V1.500h6V4" fill="none" stroke="#fff" strokeWidth="1.200" />
        <path d="M1 4h16v13H1z" fill="#fff" />
        <path d="M5 6.500h3.500V10H5z" fill="#f25022" />
        <path d="M9.500 6.500H13V10H9.500z" fill="#7fba00" />
        <path d="M5 11h3.500v3.500H5z" fill="#00a4ef" />
        <path d="M9.500 11H13v3.500H9.500z" fill="#ffb900" />
      </svg>
    ),
  },
  {
    name: "浏览器",
    icon: (
      <svg viewBox="0 0 18 18" className={t18}>
        <circle cx="9" cy="9" r="8.300" fill="#2f66e6" stroke="#fff" strokeWidth="1.300" />
        <circle cx="9" cy="9" r="4" fill="#fff" />
        <path d="M8 8h3.500a3 3 0 0 1-3 3z" fill="#2f66e6" />
      </svg>
    ),
  },
  {
    name: "WPS",
    icon: (
      <svg viewBox="0 0 18 18" className={t18} fill="none" stroke="#e2452a" strokeWidth="2">
        <path d="M0 4h11M1.500 4l4.500 11 3-7 3 7 4.500-11M5 4l3 7M13 4h5" />
      </svg>
    ),
  },
  {
    name: "Geek",
    open: true,
    icon: (
      <span className="w-[18px] h-[18px] rounded-[3px] bg-[#7ee01c] flex items-center">
        <span className="w-full h-1.5 bg-[#111] text-white text-[5px] leading-[6px] font-bold text-center">GEEK</span>
      </span>
    ),
  },
  {
    name: "百度网盘",
    open: true,
    icon: (
      <svg viewBox="0 0 18 18" className={t18} fill="none" strokeWidth="1.500">
        <rect width="18" height="18" rx="3" fill="#fff" />
        <circle cx="9" cy="6.300" r="2.800" stroke="#e04a4a" />
        <circle cx="5.800" cy="10.300" r="2.700" stroke="#3a8ee6" />
        <circle cx="12.200" cy="10.300" r="2.700" stroke="#2a6fd6" />
        <path d="M6 16h6" stroke="#aaa" />
      </svg>
    ),
  },
  {
    name: "记事本",
    open: true,
    icon: (
      <svg viewBox="0 0 18 18" className={t18}>
        <path d="M6 1l11 1-3 15L1 15z" fill="#8fc4d6" />
        <path d="M6 1l11 1-1 5-12-1z" fill="#cfe8f0" />
        <path d="M14 17l3-15 .8 1.500-2.300 13z" fill="#8b6b4a" />
      </svg>
    ),
  },
  {
    name: "QQ",
    open: true,
    icon: (
      <svg viewBox="0 0 18 18" className={t18}>
        <rect width="18" height="18" rx="4" fill="#fff" />
        <path d="M9 1.500c3 0 4 2.200 4 4.800 1.500 2 2 4 1.500 5.700-.6 0-1-.5-1.400-1-.3 2-1.500 4-4.100 4s-3.800-2-4.100-4c-.4.500-.8 1-1.400 1-.5-1.700 0-3.700 1.500-5.700 0-2.600 1-4.800 4-4.800z" fill="#111" />
        <path d="M6.500 10c1.500.8 3.500.8 5 0 .5 3-.5 5-2.500 5s-3-2-2.500-5z" fill="#fff" />
        <path d="M5 8c2.500 1.500 5.500 1.500 8 0l.3 1.500c-2.600 1.600-6 1.600-8.600 0z" fill="#e02a2a" />
        <path d="M7 6.300h4L9 7.800zM5 15.500h3.500v1H5zM9.500 15.500H13v1H9.500z" fill="#f5a623" />
        <circle cx="7.700" cy="4.500" r="0.900" fill="#fff" />
        <circle cx="10.300" cy="4.500" r="0.900" fill="#fff" />
      </svg>
    ),
  },
  {
    name: "Steam",
    open: true,
    icon: (
      <svg viewBox="0 0 18 18" className={t18}>
        <circle cx="9" cy="9" r="8.500" fill="#17395f" />
        <path d="M.8 11l6-2 4-4 3.500 3.500-4.500 3.200L8 14.500 5 15z" fill="#dfe8f2" />
        <circle cx="12" cy="6.500" r="3.300" fill="#17395f" stroke="#dfe8f2" strokeWidth="1.300" />
        <circle cx="12" cy="6.500" r="1.500" fill="#dfe8f2" />
      </svg>
    ),
  },
  {
    name: "UU加速器",
    open: true,
    icon: (
      <svg viewBox="0 0 18 18" className={t18} fill="none" stroke="#2bb3c4" strokeWidth="1.300">
        <rect width="18" height="18" rx="3" fill="#15243c" stroke="none" />
        <path d="M5 4a6 6 0 1 0 8 0M6.500 6.500a3.500 3.500 0 1 0 5 0M9 3v6" />
      </svg>
    ),
  },
  {
    name: "设置",
    open: true,
    icon: (
      <svg viewBox="0 0 18 18" className={t18} fill="none">
        <circle cx="7" cy="7.500" r="6" stroke="#dce6ea" strokeWidth="2" strokeDasharray="1.900 1.900" />
        <circle cx="7" cy="7.500" r="4.300" stroke="#dce6ea" strokeWidth="2" />
        <circle cx="14.500" cy="13.500" r="2.800" stroke="#b9cad1" strokeWidth="1.400" strokeDasharray="1.100 1.100" />
        <circle cx="14.500" cy="13.500" r="1.800" stroke="#b9cad1" strokeWidth="1.200" />
      </svg>
    ),
  },
  {
    name: "NVIDIA",
    open: true,
    icon: (
      <svg viewBox="0 0 18 18" className={t18}>
        <path d="M0 0h18v18H0z" fill="#1c1c1c" />
        <path d="M8 4.500h7.500v9H8z" fill="#76b900" />
        <path d="M2.500 9C5 5 11 5 14 9c-3 4-9 4-11.500 0z" fill="none" stroke="#76b900" />
        <path d="M8 6.500c2 0 3.500 1 4.500 2.500-1 1.500-2.500 2.500-4.500 2.500z" fill="#1c1c1c" />
        <circle cx="8.500" cy="9" r="1.500" fill="#9bd335" />
      </svg>
    ),
  },
  {
    name: "SE",
    open: true,
    icon: (
      <span className="w-[14px] h-[18px] rounded-b-lg rounded-t-sm bg-[#1f1a4d] border border-[#4d4791] text-white text-[8px] leading-4 font-bold flex justify-center">
        SE
      </span>
    ),
  },
  {
    name: "G+",
    open: true,
    icon: (
      <span className="w-[18px] h-[18px] rounded-[3px] bg-[#3a7fd0] text-white text-[10px] leading-[18px] font-bold italic flex justify-center">
        G<i className="text-[#f0b070]">+</i>
      </span>
    ),
  },
  {
    name: "ToDesk",
    open: true,
    active: true,
    icon: (
      <span className="w-[18px] h-[18px] rounded-[3px] bg-white flex items-center justify-center">
        <ToDeskLogo className="w-3.5 h-3" />
      </span>
    ),
  },
  {
    name: "QQ音乐",
    open: true,
    icon: (
      <svg viewBox="0 0 18 18" className={t18}>
        <circle cx="9" cy="9" r="9" fill="#f8dc1c" />
        <path d="M8 1l5 3.500-2.500 1.500.8 7a3.500 3.500 0 1 1-2.800-3.400L6.500 5z" fill="#2fb457" />
      </svg>
    ),
  },
  {
    name: "播放器",
    open: true,
    icon: (
      <svg viewBox="0 0 18 18" className={t18}>
        <rect width="18" height="18" rx="3" fill="#fff" />
        <path d="M4 3c4 0 10 3.500 11 6l-4 2-7-3z" fill="#1e8df0" />
        <path d="M15 9c-1 3-7 6-11 6v-3.500l7-3.500z" fill="#f6892c" />
        <path d="M11 7l4 2-4 2z" fill="#135fc0" />
      </svg>
    ),
  },
];

function Taskbar() {
  return (
    <footer className="h-[30px] shrink-0 flex items-stretch text-white bg-[linear-gradient(90deg,#1f3332_0%,#1f3332_60%,#262b2b_67%,#352523_74%,#2a2627_80%,#1f2f2e_87%,#1f3a36_100%)]">
      <button aria-label="开始" className="w-9 flex items-center justify-center">
        <svg viewBox="0 0 12 12" className="w-3 h-3">
          <path d="M0 1.700L5 1v4.700H0zM5.700.9L12 0v5.700H5.700zM0 6.400h5v4.700l-5-.7zM5.700 6.400H12V12l-6.300-.9z" fill="#fff" />
        </svg>
      </button>
      <button aria-label="搜索" className="w-[37px] flex items-center justify-center">
        <svg viewBox="0 0 18 18" className={t18} fill="none" stroke="#fff" strokeWidth="1.600">
          <circle cx="10.500" cy="7" r="5.700" />
          <path d="M6.500 11L1.500 16.500" />
        </svg>
      </button>
      <div className="w-[662px] grid grid-cols-[repeat(18,minmax(0,1fr))]">
        {taskIcons.map((t) => (
          <button key={t.name} aria-label={t.name} className={`flex flex-col items-center ${t.active ? "bg-[#4b5c5b]" : ""}`}>
            <span className="h-7 flex items-center pt-0.5">{t.icon}</span>
            {t.open && <i className="w-[30px] h-0.5 bg-[#8fa09e]" />}
          </button>
        ))}
      </div>
      <div className="ml-auto flex items-center">
        <ChevronUp className="w-3 h-3 mr-1.5" />
        <svg viewBox="0 0 12 14" className="w-3 h-3.5 mr-1.5">
          <rect x="3.500" y="0.500" width="5" height="8.500" rx="2.500" fill="#fff" />
          <path d="M1.500 6.500a4.500 4.500 0 0 0 9 0M6 11v2.500M3.500 13.300h5" fill="none" stroke="#fff" />
        </svg>
        <svg viewBox="0 0 13 12" className="w-[13px] h-3 mr-1.5" fill="none" stroke="#fff">
          <path d="M4.500 1.500h8v6.500h-8M.5.5h4v4h-4zM2.500 4.500v5.500h4M8.500 8v3M6 11h5" />
        </svg>
        <svg viewBox="0 0 13 12" className="w-[13px] h-3 mr-1.5" fill="none" stroke="#fff">
          <path d="M.5 4h2L5.500 1.500v9L2.500 8h-2zM7.500 4c.8 1.200.8 2.800 0 4M9.500 2.500c1.700 2 1.700 5 0 7M11.300 1c2 3 2 7 0 10" />
        </svg>
        <span className="text-[11px] mr-2.5">中</span>
        <span className="w-3 h-3 rounded-[3px] bg-[#e2512c] text-[10px] leading-3 font-bold italic text-center mr-3.5">S</span>
        <time className="w-10 text-[9px] leading-[14px] text-center mr-4 whitespace-nowrap">
          13:54
          <br />
          2025/7/5
        </time>
        <svg viewBox="0 0 13 13" className="w-[13px] h-[13px] mr-[15px]">
          <path d="M.5.5h12v9H8l-2.500 3v-3h-5z" fill="#fff" />
          <path d="M2.500 3h8M2.500 5h8M2.500 7h5" stroke="#243b39" />
        </svg>
        <i className="w-px h-full bg-[#7b8a89] mr-[3px]" />
      </div>
    </footer>
  );
}

export default function App() {
  return (
    <div className="h-screen min-w-[1200px] flex flex-col overflow-hidden bg-[#212121] font-['Noto_Sans','Noto_Sans_CJK_SC',sans-serif]">
      <SessionBar />
      <div className="flex-1 min-h-0 flex pb-[3px]">
        <div className="w-[47px] shrink-0" />
        <div className="relative flex-1 bg-black">
          {desktopIcons.map((d) => (
            <DesktopTile key={d.label} {...d} />
          ))}
          <ExplorerWindow />
          {/* floating controls of the remote session */}
          <button aria-label="ToDesk" className="absolute -left-[9px] top-[74px] w-[46px] h-[46px] rounded-full bg-[#f1f4fa] flex items-center justify-center">
            <ToDeskLogo className="w-7 h-6" />
          </button>
          <p className="absolute right-[184px] top-[215px] text-[36px] leading-[46px] font-medium text-black font-['Noto_Sans_CJK_SC',sans-serif] [text-shadow:0_0_4px_#fff,0_0_4px_#fff]">
            售后群 933428678
          </p>
          <button aria-label="展开工具栏" className="absolute right-0 top-[835px] w-[23px] h-[31px] rounded-l-full bg-[#3b82ee] text-white flex items-center justify-center">
            <ChevronLeft className="w-4 h-4" strokeWidth={3} />
          </button>
        </div>
        <aside className="w-[47px] shrink-0 flex flex-col justify-end items-end gap-[5px] pr-[5px] pb-px">
          <button aria-label="麦克风" className="w-6 h-6 bg-black text-white flex items-center justify-center">
            <svg viewBox="0 0 12 15" className="w-3 h-[15px]">
              <rect x="3.800" y="0.500" width="4.400" height="8.500" rx="2.200" fill="currentColor" />
              <path d="M1.200 6.500a4.800 4.800 0 0 0 9.600 0M6 11.300V14.500" fill="none" stroke="currentColor" strokeWidth="1.200" />
            </svg>
          </button>
          <button aria-label="录制" className="w-6 h-6 bg-black text-white flex items-center justify-center">
            <svg viewBox="0 0 14 14" className="w-3.5 h-3.5" fill="none" stroke="currentColor" strokeWidth="1.400">
              <path d="M5.500 1.200a6 6 0 0 0-2.800 10M8.500 12.800a6 6 0 0 0 2.800-10M7.500 1a6 6 0 0 1 2.300.7M6.500 13a6 6 0 0 1-2.300-.7" />
              <circle cx="7" cy="7" r="2" fill="currentColor" />
            </svg>
          </button>
        </aside>
      </div>
      <Taskbar />
    </div>
  );
}
